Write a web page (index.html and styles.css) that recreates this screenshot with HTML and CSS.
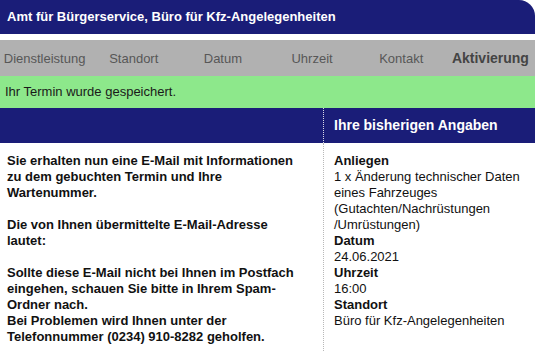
FILE: index.html
```html
<!DOCTYPE html>
<html lang="de">
<head>
    <meta charset="UTF-8">
    <meta name="viewport" content="width=device-width, initial-scale=1.0">
    <title>Terminvereinbarung</title>
    <link rel="stylesheet" href="styles.css">
</head>
<body>
    <div class="page-head">Amt für Bürgerservice, Büro für Kfz-Angelegenheiten</div>

    <div class="steps">
        <span>Dienstleistung</span>
        <span>Standort</span>
        <span>Datum</span>
        <span>Uhrzeit</span>
        <span>Kontakt</span>
        <span class="active">Aktivierung</span>
    </div>

    <div class="notice">Ihr Termin wurde gespeichert.</div>

    <div class="overview">
        <div class="col-head"></div>
        <div class="col-head side">Ihre bisherigen Angaben</div>

        <div class="info">
            <p>Sie erhalten nun eine E-Mail mit Informationen zu dem gebuchten Termin und Ihre Wartenummer.</p>
            <p>Die von Ihnen übermittelte E-Mail-Adresse lautet:</p>
            <p>Sollte diese E-Mail nicht bei Ihnen im Postfach eingehen, schauen Sie bitte in Ihrem Spam-Ordner nach.<br>
            Bei Problemen wird Ihnen unter der Telefonnummer (0234) 910-8282 geholfen.</p>
        </div>

        <dl class="summary side">
            <dt>Anliegen</dt>
            <dd>1 x Änderung technischer Daten eines Fahrzeuges (Gutachten/Nachrüstungen /Umrüstungen)</dd>
            <dt>Datum</dt>
            <dd>24.06.2021</dd>
            <dt>Uhrzeit</dt>
            <dd>16:00</dd>
            <dt>Standort</dt>
            <dd>Büro für Kfz-Angelegenheiten</dd>
        </dl>
    </div>
</body>
</html>
```

FILE: styles.css
```css
body {
    font-family: "Liberation Sans", Arial, sans-serif;
    font-size: 13px;
    margin: 0;
    padding: 0;
    background: #fff;
    color: #111;
}

.page-head {
    background: #1a1d78;
    color: #fff;
    font-weight: bold;
    font-size: 13px;
    height: 34px;
    line-height: 34px;
    padding-left: 7px;
    border-top-right-radius: 16px;
    margin-bottom: 6px;
}

.steps {
    display: grid;
    grid-template-columns: repeat(6, 1fr);
    background: #b1b1b1;
    color: #575757;
    height: 36px;
    align-items: center;
    text-align: center;
}
.steps .active {
    font-weight: bold;
    font-size: 14px;
    color: #444;
}

.notice {
    background: #8de88b;
    color: #1a1a1a;
    height: 32px;
    line-height: 32px;
    padding-left: 5px;
}

.overview {
    display: grid;
    grid-template-columns: 323px 1fr;
}
.col-head {
    background: #1a1d78;
    color: #fff;
    font-weight: bold;
    font-size: 14px;
    height: 35px;
    line-height: 35px;
}
.col-head.side {
    border-left: 1px dotted #d8d8e8;
    padding-left: 10px;
}

.info {
    font-weight: bold;
    line-height: 16px;
    padding: 10px 16px 8px 7px;
}
.info p {
    margin: 0 0 16px;
}

.summary {
    margin: 0;
    border-left: 1px dotted #b8b8b8;
    padding: 10px 10px 8px 10px;
    line-height: 16px;
}
.summary dt {
    font-weight: bold;
}
.summary dd {
    margin: 0;
}
```
